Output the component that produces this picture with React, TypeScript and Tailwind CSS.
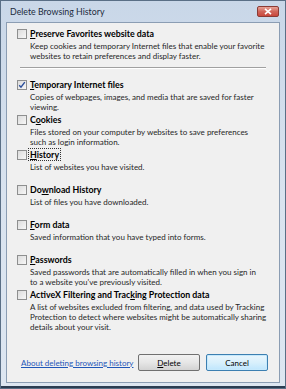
import type { ReactNode } from 'react'

interface OptionProps {
  label: ReactNode
  lines: string[]
  checked?: boolean
  focused?: boolean
  minLines?: number
}

const CheckBox = ({ checked = false }: { checked?: boolean }) => (
  <div className="w-[10px] h-[10px] shrink-0 border border-[#8e8f8f] bg-gradient-to-br from-[#dcdcdc] to-[#f7f7f7] flex items-center justify-center">
    {checked && (
      <svg width="8" height="8" viewBox="0 0 8 8">
        <path d="M1.2 4.2 L3 6.2 L6.8 1.2" fill="none" stroke="#2a4e9a" strokeWidth="1.4" />
      </svg>
    )}
  </div>
)

const Option = ({ label, lines, checked = false, focused = false, minLines = 2 }: OptionProps) => (
  <div className="flex flex-col">
    <div className="flex items-center gap-[2px] h-[13px]">
      <CheckBox checked={checked} />
      <span className={`font-bold text-[8.8px] text-black leading-[11px] px-[1px] whitespace-nowrap ${focused ? 'outline outline-1 outline-dotted outline-[#333]' : ''}`}>
        {label}
      </span>
    </div>
    <div className="pl-[13px] pt-[1px] text-[8px] leading-[10px] text-[#262626] whitespace-nowrap" style={{ minHeight: minLines * 10 + 1 }}>
      {lines.map((l) => (
        <div key={l}>{l}</div>
      ))}
    </div>
  </div>
)

const App = () => {
  return (
    <div className="w-[286px] h-[389px] overflow-hidden bg-[#5a6f86] p-[1px] font-['Lato',sans-serif]">
      <div className="w-full h-full flex flex-col bg-gradient-to-b from-[#c9d7e8] via-[#d9e3ef] to-[#dde6f1] border-b-2 border-[#2c3d52]">
        <div className="h-[21px] flex items-center justify-between pl-[9px] pr-[6px] shrink-0">
          <span className="text-[8.8px] text-[#1b2a3d] pt-[1px]">Delete Browsing History</span>
          <div className="w-[22px] h-[11px] mt-[-1px] rounded-[2px] border border-[#8b3b35] bg-gradient-to-b from-[#e7a397] via-[#d0655a] to-[#c9473c] flex items-center justify-center">
            <svg width="8" height="7" viewBox="0 0 8 7">
              <path d="M1 0.8 L7 6.2 M7 0.8 L1 6.2" stroke="#fff" strokeWidth="1.6" />
            </svg>
          </div>
        </div>
        <div className="mx-[5px] mb-[3px] flex-1 min-h-0 bg-[#f0f0f0] border border-[#8b9db3] flex flex-col pl-[10px] pr-[10px] pt-[4px]">
          <Option
            label={<><u>P</u>reserve Favorites website data</>}
            lines={['Keep cookies and temporary Internet files that enable your favorite', 'websites to retain preferences and display faster.']}
          />
          <div className="mx-[3px] mt-[6px] mb-[9px] h-[2px] border-t border-[#a0a0a0] border-b border-b-white" />
          <div className="flex flex-col gap-[1px]">
            <Option
              checked
              label={<><u>T</u>emporary Internet files</>}
              lines={['Copies of webpages, images, and media that are saved for faster', 'viewing.']}
            />
            <Option
              label={<>C<u>o</u>okies</>}
              lines={['Files stored on your computer by websites to save preferences', 'such as login information.']}
            />
            <Option focused label={<><u>H</u>istory</>} lines={['List of websites you have visited.']} />
            <Option label={<>Do<u>w</u>nload History</>} lines={['List of files you have downloaded.']} />
            <Option label={<><u>F</u>orm data</>} lines={['Saved information that you have typed into forms.']} />
            <Option
              label={<><u>P</u>asswords</>}
              lines={['Saved passwords that are automatically filled in when you sign in', "to a website you've previously visited."]}
            />
            <Option
              label={<>ActiveX Filtering and Trac<u>k</u>ing Protection data</>}
              lines={[
                'A list of websites excluded from filtering, and data used by Tracking',
                'Protection to detect where websites might be automatically sharing',
                'details about your visit.',
              ]}
            />
          </div>
          <div className="flex-1" />
          <div className="flex items-center justify-between pl-[4px] pr-[1px] mb-[11px]">
            <a className="text-[8px] text-[#1f56b8] underline whitespace-nowrap">About deleting browsing history</a>
            <div className="flex gap-[6px]">
              <button className="w-[62px] h-[17px] rounded-[2px] border border-[#707070] bg-gradient-to-b from-[#f2f2f2] via-[#e6e6e6] to-[#d3d3d3] text-[8px] text-black">
                <u>D</u>elete
              </button>
              <button className="w-[62px] h-[17px] rounded-[2px] border border-[#3c7fb1] bg-gradient-to-b from-[#eaf6fd] via-[#d9f0fc] to-[#bee6fd] text-[8px] text-black shadow-[inset_0_0_0_1px_#c6e9fc]">
                Cancel
              </button>
            </div>
          </div>
        </div>
      </div>
    </div>
  )
}

export default App
